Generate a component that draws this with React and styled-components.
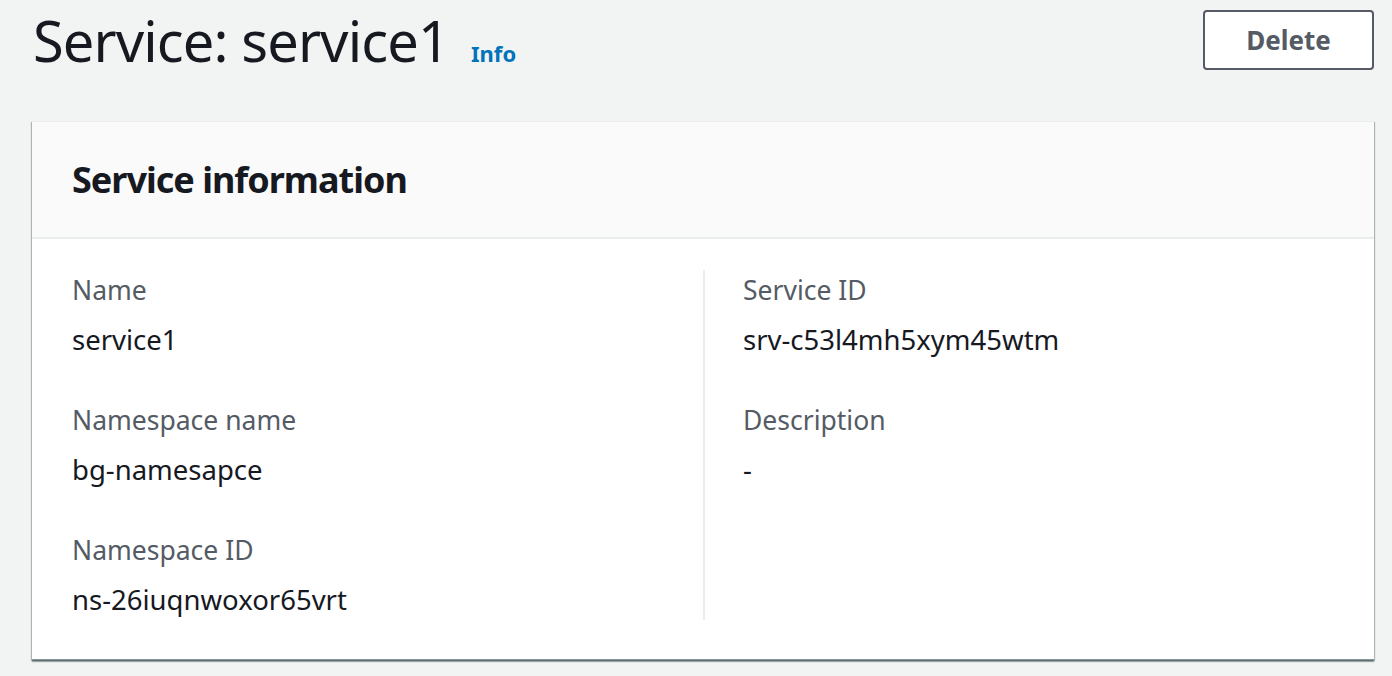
import styled, { createGlobalStyle } from "styled-components";

const GlobalStyle = createGlobalStyle`
    html, body {
        margin: 0;
        padding: 0;
        background: #f2f3f3;
        font-family: "Noto Sans", "Open Sans", sans-serif;
        color: #16191f;
    }
`;

const Page = styled.div`
    padding: 0 18px 16px 32px;
`;

const TitleRow = styled.div`
    display: flex;
    align-items: center;
    justify-content: space-between;
    height: 80px;
    margin-bottom: 41px;
`;

const TitleGroup = styled.div`
    display: flex;
    align-items: baseline;
    gap: 22px;
    padding-left: 1px;
`;

const Title = styled.h1`
    margin: 0;
    font-size: 56px;
    font-weight: 400;
    line-height: 80px;
    letter-spacing: -0.9px;
    color: #16191f;
`;

const InfoLink = styled.a`
    font-size: 22px;
    font-weight: 700;
    color: #0073bb;
    text-decoration: none;
`;

const Button = styled.button`
    width: 171px;
    height: 60px;
    background: #ffffff;
    border: 2px solid #545b64;
    border-radius: 4px;
    font-family: inherit;
    font-size: 26px;
    font-weight: 700;
    color: #545b64;
    cursor: pointer;
`;

const Card = styled.section`
    background: #ffffff;
    border-top: 1px solid #eaeded;
    border-bottom: 1px solid #879596;
    box-shadow: 0 2px 1px 0 rgba(0, 28, 36, 0.3), 1px 1px 1px 0 rgba(0, 28, 36, 0.25),
        -1px 1px 1px 0 rgba(0, 28, 36, 0.25);
`;

const CardHeader = styled.div`
    display: flex;
    align-items: center;
    height: 115px;
    padding: 0 40px;
    background: #fafafa;
    border-bottom: 2px solid #eaeded;
`;

const CardTitle = styled.h2`
    margin: 0;
    font-size: 36px;
    font-weight: 700;
    letter-spacing: -1px;
    color: #16191f;
`;

const CardBody = styled.div`
    display: grid;
    grid-template-columns: 1fr 1fr;
    padding: 31px 40px 39px;
`;

const Column = styled.div`
    display: flex;
    flex-direction: column;
    gap: 40px;
    ${(p) => p.divided && `
        border-left: 2px solid #eaeded;
        padding-left: 38px;
    `}
`;

const Field = styled.div`
    display: flex;
    flex-direction: column;
    gap: 10px;
`;

const Label = styled.div`
    font-size: 26.5px;
    line-height: 40px;
    color: #545b64;
`;

const Value = styled.div`
    font-size: 27.5px;
    line-height: 40px;
    color: #16191f;
`;

const left = [
    ["Name", "service1"],
    ["Namespace name", "bg-namesapce"],
    ["Namespace ID", "ns-26iuqnwoxor65vrt"],
];

const right = [
    ["Service ID", "srv-c53l4mh5xym45wtm"],
    ["Description", "-"],
];

const Fields = ({ items }) =>
    items.map(([label, value]) => (
        <Field key={label}>
            <Label>{label}</Label>
            <Value>{value}</Value>
        </Field>
    ));

const App = () => {
    return (
        <Page>
            <GlobalStyle />
            <TitleRow>
                <TitleGroup>
                    <Title>Service: service1</Title>
                    <InfoLink href="#">Info</InfoLink>
                </TitleGroup>
                <Button>Delete</Button>
            </TitleRow>
            <Card>
                <CardHeader>
                    <CardTitle>Service information</CardTitle>
                </CardHeader>
                <CardBody>
                    <Column>
                        <Fields items={left} />
                    </Column>
                    <Column divided>
                        <Fields items={right} />
                    </Column>
                </CardBody>
            </Card>
        </Page>
    );
};

export default App;
